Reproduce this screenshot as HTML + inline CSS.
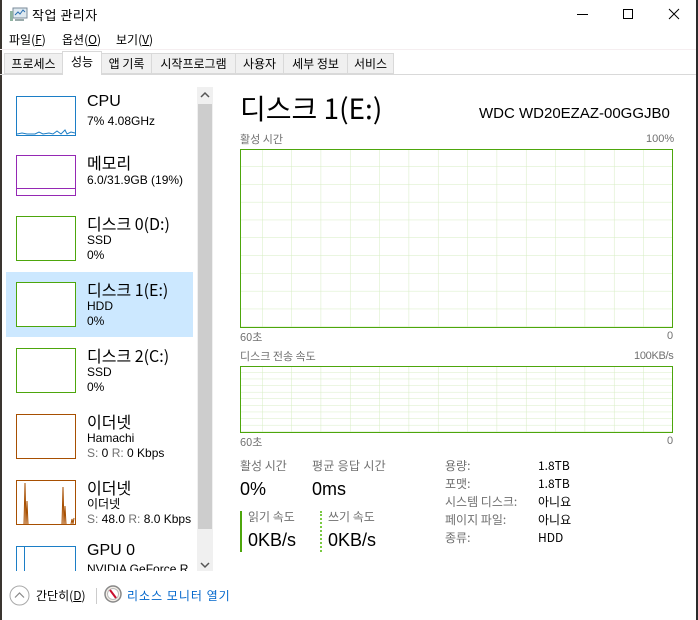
<!DOCTYPE html>
<html><head><meta charset="utf-8"><style>
*{margin:0;padding:0;box-sizing:border-box}
body{width:698px;height:620px;overflow:hidden;background:#fff;font-family:"Liberation Sans","Noto Sans CJK KR",sans-serif;color:#000;position:relative}
.a{position:absolute;white-space:nowrap}
.k{font-family:"Noto Sans CJK KR","Liberation Sans",sans-serif}
.tab{position:absolute;top:53px;height:21px;border:1px solid #d9d9d9;background:#f0f0f0;font-size:12px;line-height:19px;text-align:center}
.th{position:absolute;left:16px;width:60px;border:1px solid}
.t1{position:absolute;left:87px;font-size:16px}
.t2{position:absolute;left:87px;font-size:12px}
.g{color:#707070}
</style></head><body>
<div class="a" style="left:0;top:0;width:2px;height:620px;background:#3a3530"></div>
<div class="a" style="left:696px;top:0;width:2px;height:620px;background:#2a2a2a"></div>
<svg class="a" style="left:10px;top:7px" width="18" height="16"><rect x="3" y="1" width="14" height="10" fill="#dfe9f0" stroke="#7a8a99"/><polyline points="5,8 8,5 10,7 13,3 15,5" fill="none" stroke="#2a6fb0" stroke-width="1"/><rect x="0" y="4" width="3" height="10" fill="#8fb3a0"/><rect x="5" y="12" width="9" height="2" fill="#9aa"/></svg>
<div class="a k" style="left:32px;top:5px;font-size:13px;letter-spacing:0.5px">작업 관리자</div>
<div class="a" style="left:577px;top:14px;width:11px;height:1px;background:#000"></div>
<div class="a" style="left:623px;top:9px;width:10px;height:10px;border:1px solid #000"></div>
<svg class="a" style="left:668px;top:8px" width="12" height="12"><path d="M1 1L11 11M11 1L1 11" stroke="#000" stroke-width="1"/></svg>
<div class="a k" style="left:9px;top:31px;font-size:12px">파일(<u>F</u>)</div>
<div class="a k" style="left:62px;top:31px;font-size:12px">옵션(<u>O</u>)</div>
<div class="a k" style="left:116px;top:31px;font-size:12px">보기(<u>V</u>)</div>
<div class="a" style="left:0;top:49px;width:696px;height:1px;background:#f5eef0"></div>
<div class="a" style="left:0;top:74px;width:696px;height:1px;background:#d9d9d9"></div>
<div class="tab k" style="left:4px;width:59px">프로세스</div>
<div class="tab k" style="left:62px;width:40px;top:51px;height:24px;background:#fff;border-bottom:none">성능</div>
<div class="tab k" style="left:101px;width:51px">앱 기록</div>
<div class="tab k" style="left:151px;width:85px">시작프로그램</div>
<div class="tab k" style="left:235px;width:49px">사용자</div>
<div class="tab k" style="left:283px;width:65px">세부 정보</div>
<div class="tab k" style="left:347px;width:47px">서비스</div>
<div class="a" style="left:6px;top:272px;width:187px;height:65px;background:#cce8ff"></div>
<div class="th" style="top:96px;height:40px;border-color:#1c7ec6"></div>
<svg class="a" style="left:17px;top:126px" width="58" height="9"><polyline points="0,8 5,7 10,8 18,8 22,6 26,8 32,7 36,8 40,5 44,8 48,4 50,8 54,6 58,7" fill="none" stroke="#1c7ec6" stroke-width="1"/></svg>
<div class="t1" style="top:93px">CPU</div>
<div class="t2" style="top:114px">7% 4.08GHz</div>
<div class="th" style="top:155px;height:41px;border-color:#9528b4"></div>
<div class="a" style="left:17px;top:188px;width:58px;height:1px;background:#9528b4"></div>
<div class="t1 k" style="top:150px">메모리</div>
<div class="t2" style="top:173px">6.0/31.9GB (19%)</div>
<div class="th" style="top:216px;height:45px;border-color:#4da60c"></div>
<div class="t1 k" style="top:211px">디스크 0(D:)</div>
<div class="t2" style="top:233px">SSD</div><div class="t2" style="top:248px">0%</div>
<div class="th" style="top:282px;height:45px;border-color:#4da60c;background:#fff"></div>
<div class="t1 k" style="top:277px">디스크 1(E:)</div>
<div class="t2" style="top:299px">HDD</div><div class="t2" style="top:314px">0%</div>
<div class="th" style="top:348px;height:45px;border-color:#4da60c"></div>
<div class="t1 k" style="top:343px">디스크 2(C:)</div>
<div class="t2" style="top:365px">SSD</div><div class="t2" style="top:380px">0%</div>
<div class="th" style="top:414px;height:45px;border-color:#a74f01"></div>
<div class="t1 k" style="top:409px">이더넷</div>
<div class="t2" style="top:431px">Hamachi</div>
<div class="t2" style="top:446px"><span class="g">S:</span> 0 <span class="g">R:</span> 0 Kbps</div>
<div class="th" style="top:480px;height:45px;border-color:#a74f01"></div>
<svg class="a" style="left:17px;top:481px" width="58" height="43"><path d="M7 43L8 2L9 43M9 43L10 20L11 43M45 43L46 6L47 43M47 43L48 25L49 43M54 43L55 38L56 43L57 37" fill="#f2d2b8" stroke="#a74f01" stroke-width="1"/></svg>
<div class="t1 k" style="top:475px">이더넷</div>
<div class="t2 k" style="top:495px">이더넷</div>
<div class="t2" style="top:512px"><span class="g">S:</span> 48.0 <span class="g">R:</span> 8.0 Kbps</div>
<div class="a" style="left:0;top:540px;width:196px;height:31px;overflow:hidden">
<div class="th" style="top:6px;height:45px;border-color:#1c7ec6"></div>
<div class="a" style="left:24px;top:7px;width:1px;height:30px;background:#1c7ec6"></div>
<div class="t1" style="top:2px">GPU 0</div>
<div class="t2" style="top:22px">NVIDIA GeForce R</div>
</div>
<div class="a" style="left:197px;top:87px;width:16px;height:484px;background:#f0f0f0"></div>
<div class="a" style="left:198px;top:104px;width:14px;height:425px;background:#cdcdcd"></div>
<svg class="a" style="left:200px;top:91px" width="10" height="8"><path d="M1 6L5 2L9 6" fill="none" stroke="#555" stroke-width="1.5"/></svg>
<svg class="a" style="left:200px;top:561px" width="10" height="8"><path d="M1 2L5 6L9 2" fill="none" stroke="#555" stroke-width="1.5"/></svg>
<div class="a k" style="left:240px;top:88px;font-size:28px;line-height:40px">디스크 1(E:)</div>
<div class="a" style="left:479px;top:105px;font-size:15px">WDC WD20EZAZ-00GGJB0</div>
<div class="a k g" style="left:240px;top:131px;font-size:11px">활성 시간</div>
<div class="a g" style="left:646px;top:133px;font-size:11px">100%</div>
<svg class="a" style="left:240px;top:149px" width="433" height="179">
<defs><pattern id="p1" x="22" y="0" width="29.33" height="17.8" patternUnits="userSpaceOnUse"><path d="M0 0V17.8M0 17.8H29.33" stroke="#d6ecc2" stroke-width="1" fill="none"/></pattern>
<pattern id="p2" x="22" y="0" width="29.33" height="6.6" patternUnits="userSpaceOnUse"><path d="M0 0V6.6M0 6.6H29.33" stroke="#d6ecc2" stroke-width="1" fill="none"/></pattern></defs>
<rect x="0" y="0" width="433" height="179" fill="url(#p1)"/>
<rect x="0.5" y="0.5" width="432" height="178" fill="none" stroke="#4da60c"/></svg>
<div class="a k g" style="left:240px;top:329px;font-size:11px">60초</div>
<div class="a g" style="left:667px;top:330px;font-size:11px">0</div>
<div class="a k g" style="left:240px;top:348px;font-size:11px">디스크 전송 속도</div>
<div class="a g" style="left:634px;top:350px;font-size:11px;letter-spacing:-0.3px">100KB/s</div>
<svg class="a" style="left:240px;top:366px" width="433" height="67">
<rect x="0" y="0" width="433" height="67" fill="url(#p2)"/>
<rect x="0.5" y="0.5" width="432" height="66" fill="none" stroke="#4da60c"/></svg>
<div class="a k g" style="left:240px;top:434px;font-size:11px">60초</div>
<div class="a g" style="left:667px;top:435px;font-size:11px">0</div>
<div class="a k g" style="left:240px;top:457px;font-size:12px">활성 시간</div>
<div class="a k g" style="left:312px;top:457px;font-size:12px;letter-spacing:0.3px">평균 응답 시간</div>
<div class="a" style="left:240px;top:479px;font-size:18px">0%</div>
<div class="a" style="left:312px;top:479px;font-size:18px">0ms</div>
<div class="a" style="left:240px;top:511px;width:2px;height:41px;background:#4da60c"></div>
<div class="a" style="left:320px;top:511px;width:0;height:41px;border-left:2px dotted #7ac943"></div>
<div class="a k g" style="left:248px;top:508px;font-size:12px">읽기 속도</div>
<div class="a k g" style="left:328px;top:508px;font-size:12px">쓰기 속도</div>
<div class="a" style="left:248px;top:530px;font-size:18px">0KB/s</div>
<div class="a" style="left:328px;top:530px;font-size:18px">0KB/s</div>
<div class="a k g" style="left:445px;top:457px;font-size:12px;line-height:18px">용량:<br>포맷:<br>시스템 디스크:<br>페이지 파일:<br>종류:</div>
<div class="a k" style="left:538px;top:457px;font-size:12px;line-height:18px">1.8TB<br>1.8TB<br>아니요<br>아니요<br>HDD</div>
<svg class="a" style="left:9px;top:585px" width="21" height="21"><circle cx="10.5" cy="10.5" r="9.5" fill="none" stroke="#aaa"/><path d="M6 12.5L10.5 8L15 12.5" fill="none" stroke="#888" stroke-width="1.2"/></svg>
<div class="a k" style="left:36px;top:587px;font-size:12px">간단히(<u>D</u>)</div>
<div class="a" style="left:96px;top:588px;width:1px;height:16px;background:#ccc"></div>
<svg class="a" style="left:104px;top:585px" width="18" height="18"><circle cx="9" cy="9" r="8" fill="#f4efe8" stroke="#888" stroke-width="1.5"/><circle cx="9" cy="9" r="5.5" fill="#fff" stroke="#bbb"/><path d="M6 5L12 13" stroke="#c8102e" stroke-width="2"/></svg>
<div class="a k" style="left:127px;top:587px;font-size:12px;color:#0066cc;letter-spacing:1px">리소스 모니터 열기</div>
</body></html>
